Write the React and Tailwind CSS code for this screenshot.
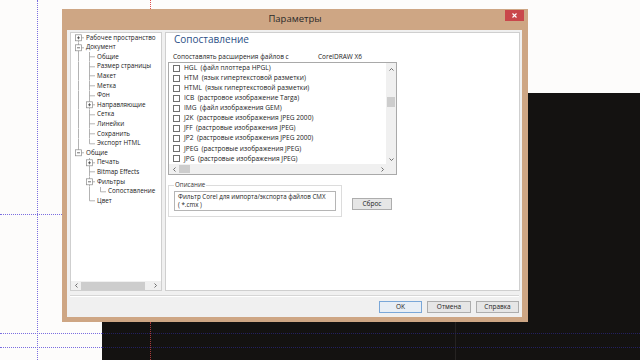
import React from 'react';

const font = { fontFamily: '"Open Sans", "Noto Sans", sans-serif' };

const treeRows = [
  { cells: ['F'], box: '+', text: 'Рабочее пространство' },
  { cells: ['T'], box: '-', text: 'Документ' },
  { cells: ['I', 'T'], text: 'Общие' },
  { cells: ['I', 'T'], text: 'Размер страницы' },
  { cells: ['I', 'T'], text: 'Макет' },
  { cells: ['I', 'T'], text: 'Метка' },
  { cells: ['I', 'T'], text: 'Фон' },
  { cells: ['I', 'T'], box: '+', text: 'Направляющие' },
  { cells: ['I', 'T'], text: 'Сетка' },
  { cells: ['I', 'T'], text: 'Линейки' },
  { cells: ['I', 'T'], text: 'Сохранить' },
  { cells: ['I', 'L'], text: 'Экспорт HTML' },
  { cells: ['L'], box: '-', text: 'Общие' },
  { cells: [' ', 'T'], box: '+', text: 'Печать' },
  { cells: [' ', 'T'], text: 'Bitmap Effects' },
  { cells: [' ', 'T'], box: '-', text: 'Фильтры' },
  { cells: [' ', 'I', 'L'], text: 'Сопоставление' },
  { cells: [' ', 'L'], text: 'Цвет' },
];

const files = [
  ['HGL', 'файл плоттера HPGL'],
  ['HTM', 'язык гипертекстовой разметки'],
  ['HTML', 'язык гипертекстовой разметки'],
  ['ICB', 'растровое изображение Targa'],
  ['IMG', 'файл изображения GEM'],
  ['J2K', 'растровые изображения JPEG 2000'],
  ['JFF', 'растровые изображения JPEG'],
  ['JP2', 'растровые изображения JPEG 2000'],
  ['JPEG', 'растровые изображения JPEG'],
  ['JPG', 'растровые изображения JPEG'],
];

function TreeCell({ kind, box, last }) {
  const c = '#a0a0a0';
  return (
    <svg width="11" height="9.6" viewBox="0 0 11 9.6" className="shrink-0 block">
      {(kind === 'I' || kind === 'T') && <line x1="5.5" y1="0" x2="5.5" y2="9.6" stroke={c} strokeWidth="0.8" />}
      {kind === 'L' && <line x1="5.5" y1="0" x2="5.5" y2="4.8" stroke={c} strokeWidth="0.8" />}
      {kind === 'F' && <line x1="5.5" y1="4.8" x2="5.5" y2="9.6" stroke={c} strokeWidth="0.8" />}
      {last && kind !== 'I' && kind !== ' ' && <line x1="5.5" y1="4.8" x2="11" y2="4.8" stroke={c} strokeWidth="0.8" />}
      {last && box && (
        <g>
          <rect x="2.5" y="1.8" width="6" height="6" fill="#fff" stroke="#8a8a8a" strokeWidth="0.7" />
          <line x1="4" y1="4.8" x2="7" y2="4.8" stroke="#333" strokeWidth="0.7" />
          {box === '+' && <line x1="5.5" y1="3.3" x2="5.5" y2="6.3" stroke="#333" strokeWidth="0.7" />}
        </g>
      )}
    </svg>
  );
}

function Chevron({ dir }) {
  const d = {
    up: 'M1.5 4.5 L3.5 2.5 L5.5 4.5',
    down: 'M1.5 2.5 L3.5 4.5 L5.5 2.5',
    left: 'M4.5 1.5 L2.5 3.5 L4.5 5.5',
    right: 'M2.5 1.5 L4.5 3.5 L2.5 5.5',
  }[dir];
  return (
    <svg width="7" height="7" viewBox="0 0 7 7" className="block">
      <path d={d} fill="none" stroke="#606060" strokeWidth="0.9" />
    </svg>
  );
}

function Button({ children, primary, className = '' }) {
  return (
    <div
      className={`h-[12px] flex items-center justify-center text-[6.5px] text-[#222] border ${
        primary ? 'border-[#7aa7d8] bg-[#e8eef5]' : 'border-[#adadad] bg-[#e6e6e6]'
      } ${className}`}
    >
      {children}
    </div>
  );
}

export default function App() {
  return (
    <div className="relative w-[640px] h-[360px] overflow-hidden bg-[#fdfcfb]" style={font}>
      {/* drawing canvas behind the dialog */}
      <div className="absolute left-[528px] top-[93px] right-0 bottom-0 bg-[#141211]" />
      <div className="absolute left-[102px] top-[322px] right-0 bottom-0 bg-[#141211]" />
      <div className="absolute left-[455px] top-[322px] bottom-0 w-px bg-[#262322]" />
      <div className="absolute left-[37px] top-0 bottom-0 border-l border-dotted border-[#7b6ee0]" />
      <div className="absolute left-0 w-[62px] top-[214px] border-t border-dotted border-[#7b6ee0]" />
      <div className="absolute left-0 w-[102px] top-[333px] border-t border-dotted border-[#7b6ee0]" />
      <div className="absolute left-0 w-[102px] top-[347px] border-t border-dotted border-[#7b6ee0]" />
      <div className="absolute left-[102px] right-0 top-[333px] border-t border-dotted border-[#232060]" />
      <div className="absolute left-[102px] right-0 top-[347px] border-t border-dotted border-[#232060]" />
      <div className="absolute left-[150px] top-0 h-[9px] border-l border-dotted border-[#e04a4a]" />
      <div className="absolute left-[150px] top-[322px] bottom-0 border-l border-dotted border-[#a83a3a]" />

      {/* dialog window */}
      <div className="absolute left-[62px] top-[9px] w-[466px] h-[313px] bg-[#cea684] flex flex-col">
        <div className="h-[21px] relative flex items-center justify-center">
          <span className="text-[9.5px] text-[#2a2a2a] -mt-[1px]">Параметры</span>
          <div className="absolute right-[4px] top-[1px] w-[19px] h-[11px] bg-[#c9474b] flex items-center justify-center">
            <svg width="5" height="5" viewBox="0 0 5 5">
              <path d="M0.5 0.5 L4.5 4.5 M4.5 0.5 L0.5 4.5" stroke="#fff" strokeWidth="1.1" />
            </svg>
          </div>
        </div>

        <div className="flex-1 ml-[5px] mr-[6px] mb-[5px] bg-[#f0f0f0] flex flex-col">
          <div className="flex gap-[3px] pl-[3px] pt-[2px]">
            {/* tree */}
            <div className="w-[92px] h-[259px] bg-white border border-[#cfcfcf] flex flex-col">
              <div className="flex-1 overflow-hidden pl-[2px] text-[6.3px] text-[#1a1a1a]">
                {treeRows.map((r, i) => (
                  <div key={i} className="flex items-center h-[9.6px]">
                    {r.cells.map((k, j) => (
                      <TreeCell key={j} kind={k} box={r.box} last={j === r.cells.length - 1} />
                    ))}
                    <span className="ml-[2px] whitespace-nowrap leading-none">{r.text}</span>
                  </div>
                ))}
              </div>
              <div className="h-[9px] flex items-center bg-[#f0f0f0] px-[2px] gap-[1px]">
                <Chevron dir="left" />
                <div className="w-[64px] h-[8px] bg-[#cdcdcd]" />
                <div className="flex-1" />
                <Chevron dir="right" />
              </div>
            </div>

            {/* page */}
            <div className="w-[355px] h-[259px] bg-white border border-[#cfcfcf] flex flex-col pl-[2px]">
              <div className="pl-[6px] text-[10px] text-[#2c4f86] leading-[12px]">Сопоставление</div>
              <div className="flex pl-[5px] mt-[8px] text-[6.5px] text-[#222] leading-[8px]">
                <span className="w-[145px]">Сопоставлять расширения файлов с</span>
                <span>CorelDRAW X6</span>
              </div>

              <div className="mt-[1px] w-[229px] h-[113px] border border-[#a9a9a9] flex flex-col">
                <div className="flex flex-1 min-h-0">
                  <div className="flex-1 overflow-hidden pl-[4px] text-[6.6px] text-[#222]">
                    {files.map(([ext, desc]) => (
                      <div key={ext} className="flex items-center h-[10.1px] shrink-0">
                        <div className="w-[7px] h-[7px] border border-[#6f6f6f] bg-white shrink-0" />
                        <span className="ml-[4px] whitespace-pre leading-none">{`${ext}  (${desc})`}</span>
                      </div>
                    ))}
                    <div className="flex items-center h-[10.1px] shrink-0">
                      <div className="w-[7px] h-[7px] border border-[#6f6f6f] bg-white shrink-0" />
                    </div>
                  </div>
                  <div className="w-[10px] bg-[#f0f0f0] flex flex-col items-center">
                    <div className="mt-[3px]"><Chevron dir="up" /></div>
                    <div className="mt-[24px] w-[8px] h-[10px] bg-[#cdcdcd]" />
                    <div className="flex-1" />
                    <div className="mb-[1px]"><Chevron dir="down" /></div>
                  </div>
                </div>
                <div className="h-[10px] flex items-center bg-[#f0f0f0]">
                  <div className="flex-1 flex items-center pl-[2px] gap-[1px]">
                    <Chevron dir="left" />
                    <div className="w-[11px] h-[8px] bg-[#cdcdcd]" />
                    <div className="flex-1" />
                    <Chevron dir="right" />
                  </div>
                  <div className="w-[10px]" />
                </div>
              </div>

              <div className="flex items-start mt-[10px]">
                <div className="relative w-[174px] h-[32px] border border-[#dcdcdc] px-[5px] pt-[5px]">
                  <span className="absolute left-[5px] top-[-5px] bg-white px-[1px] text-[6.2px] text-[#333] leading-[8px]">Описание</span>
                  <div className="h-[20px] border border-[#b5b5b5] px-[3px] pt-[1px] text-[6.2px] leading-[8px] text-[#222]">
                    <div>Фильтр Corel для импорта/экспорта файлов CMX</div>
                    <div>( *.cmx )</div>
                  </div>
                </div>
                <Button className="ml-[10px] mt-[13px] w-[40px]">Сброс</Button>
              </div>
            </div>
          </div>

          <div className="mt-[4px] mx-[3px] h-[2px] border-t border-[#d6d6d6] border-b border-b-white" />

          <div className="flex justify-end gap-[5px] pr-[3px] mt-[4px]">
            <Button primary className="w-[43px]">OK</Button>
            <Button className="w-[44px]">Отмена</Button>
            <Button className="w-[43px]">Справка</Button>
          </div>
        </div>
      </div>
    </div>
  );
}
